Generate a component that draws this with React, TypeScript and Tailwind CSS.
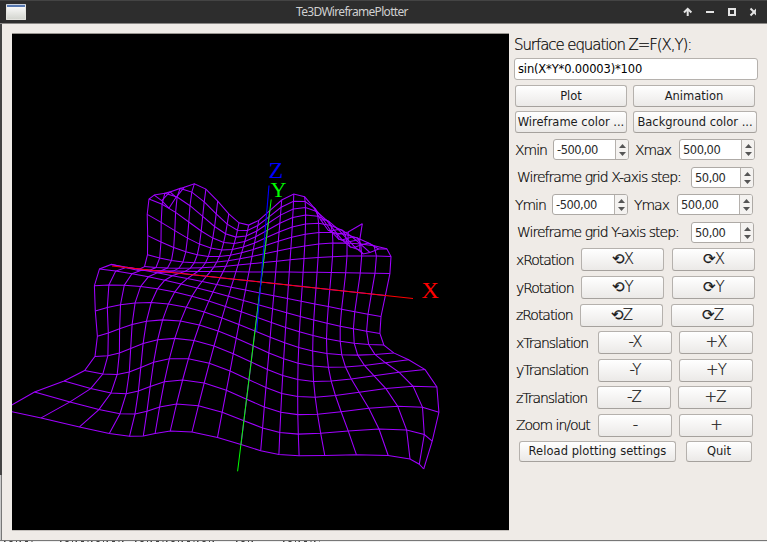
import React from 'react';

type Pt = [number, number];

// Camera fitted to the square viewport.
const cam = { yaw: -1.661, pitch: 39.944, roll: 4.85, dist: 904.143, zoom: 249.039, cx: 249, cy: 248.1 };
const rad = Math.PI / 180;

function project(x: number, y: number, z: number): Pt {
  const cy = Math.cos(cam.yaw * rad);
  const sy = Math.sin(cam.yaw * rad);
  const x1 = cy * x - sy * y;
  const y1 = sy * x + cy * y;
  const cp = Math.cos(cam.pitch * rad);
  const sp = Math.sin(cam.pitch * rad);
  const up = cp * y1 + sp * z;
  const depth = cam.dist - (cp * z - sp * y1);
  const px = (cam.zoom * x1) / depth;
  const py = (-cam.zoom * up) / depth;
  const cr = Math.cos(cam.roll * rad);
  const sr = Math.sin(cam.roll * rad);
  return [cam.cx + cr * px - sr * py, cam.cy + sr * px + cr * py];
}

const surface = (x: number, y: number) => Math.sin(x * y * 0.00003) * 100;
const steps = Array.from({ length: 20 }, (_, i) => -500 + i * 50);
const toPoints = (pts: Pt[]) => pts.map(([x, y]) => `${x.toFixed(1)},${y.toFixed(1)}`).join(' ');
const wires = [
  ...steps.map((y) => toPoints(steps.map((x) => project(x, y, surface(x, y))))),
  ...steps.map((x) => toPoints(steps.map((y) => project(x, y, surface(x, y))))),
];

function Plot() {
  return (
    <svg className="block h-[496px] w-[497px] bg-black" viewBox="0 0 497 496">
      <g fill="none" stroke="#a000ff" strokeWidth="1.05">
        {wires.map((p, i) => (
          <polyline key={i} points={p} />
        ))}
      </g>
      <line x1="100" y1="232" x2="401" y2="264.5" stroke="#f00" />
      <line x1="259.2" y1="165.500" x2="225.6" y2="437.3" stroke="#0f0" />
      <line x1="257" y1="151.500" x2="244.6" y2="297.500" stroke="#00f" strokeWidth="1.1" />
      <g className="font-['Liberation_Serif',serif] text-[24px]">
        <text x="256.5" y="143.5" fill="#00f">Z</text>
        <text x="258.5" y="162.500" fill="#0f0" className="text-[22px]">Y</text>
        <text x="409.500" y="264" fill="#f00">X</text>
      </g>
    </svg>
  );
}

function Button({ className, children }: { className: string; children: React.ReactNode }) {
  return (
    <button
      className={`flex shrink-0 items-center justify-center whitespace-nowrap rounded-[3px] border border-[#b5b1ad] border-b-[#a5a19d] bg-linear-to-b from-white to-[#ebe9e7] text-[#1c1c1c] ${className}`}
    >
      {children}
    </button>
  );
}

function Label({ className, children }: { className: string; children: React.ReactNode }) {
  return (
    <span
      className={`shrink-0 whitespace-nowrap font-['DejaVu_Sans_Light','DejaVu_Sans',sans-serif] text-[14px] font-extralight tracking-[-1.04px] text-black [-webkit-text-stroke:0.2px_#000] ${className}`}
    >
      {children}
    </span>
  );
}

function Spin({ className, value }: { className: string; value: string }) {
  return (
    <div className={`flex h-[21px] shrink-0 overflow-hidden rounded-[3px] border border-[#aeaaa6] bg-white ${className}`}>
      <span className="flex flex-1 items-center pt-[2px] pl-[3px] text-[11.5px] tracking-[-0.5px] text-[#2a2a2a]">{value}</span>
      <span className="flex w-[13px] items-center justify-center border-l border-[#b5b1ad] bg-[#f4f2f0]">
        <svg className="h-[15px] w-[7px]" viewBox="0 0 7 15" fill="#555">
          <path d="M3.5 2 7 6H0z" />
          <path d="M3.5 14 7 10H0z" />
        </svg>
      </span>
    </div>
  );
}

const rotations = [
  { axis: 'X', name: 'xRotation', label: 'w-[65px]' },
  { axis: 'Y', name: 'yRotation', label: 'w-[65px]' },
  { axis: 'Z', name: 'zRotation', label: 'w-[64px]' },
];

const moves = [
  { name: 'xTranslation', minus: '-X', plus: '+X', label: 'w-[82px]' },
  { name: 'yTranslation', minus: '-Y', plus: '+Y', label: 'w-[82px]' },
  { name: 'zTranslation', minus: '-Z', plus: '+Z', label: 'w-[81px]' },
  { name: 'Zoom in/out', minus: '-', plus: '+', label: 'w-[82px]' },
];

const rowClass = 'flex h-[27.55px] shrink-0 items-center';
const thin =
  "font-['DejaVu_Sans_Light','DejaVu_Sans',sans-serif] font-extralight text-[15px] tracking-[-0.9px] h-[23px] [-webkit-text-stroke:0.2px_#000]";

function Controls() {
  return (
    <div className="flex w-[254px] flex-col">
      <Label className="mt-[9px] h-[25px] text-[15px]! leading-[25px] tracking-[-1.08px]!">Surface equation Z=F(X,Y):</Label>
      <div className="flex h-[22px] w-[244px] items-center rounded-[3px] border border-[#b5b1ad] bg-white pt-[1px] pl-[3px] text-[11.5px] tracking-[-0.15px]">
        sin(X*Y*0.00003)*100
      </div>
      <div className="mt-[5px] flex gap-[6px] pl-[1px]">
        <Button className="h-[22px] w-[112px] pt-[1px]">Plot</Button>
        <Button className="h-[22px] w-[122px] pt-[1px]">Animation</Button>
      </div>
      <div className="mt-[4px] mb-[3px] flex gap-[6px] pl-[1px]">
        <Button className="h-[22px] w-[112px] pt-[1px]">Wireframe color ...</Button>
        <Button className="h-[22px] w-[124px] pt-[1px]">Background color ...</Button>
      </div>
      <div className={`${rowClass} pl-[1px]`}>
        <Label className="w-[38px]">Xmin</Label>
        <Spin className="w-[76px]" value="-500,00" />
        <Label className="ml-[6px] w-[44px]">Xmax</Label>
        <Spin className="w-[76px]" value="500,00" />
      </div>
      <div className={`${rowClass} pl-[3px]`}>
        <Label className="w-[174px] tracking-[-0.98px]!">Wireframe grid X-axis step:</Label>
        <Spin className="w-[63px]" value="50,00" />
      </div>
      <div className={`${rowClass} pl-[1px]`}>
        <Label className="w-[37px]">Ymin</Label>
        <Spin className="w-[76px]" value="-500,00" />
        <Label className="ml-[6px] w-[43px]">Ymax</Label>
        <Spin className="w-[76px]" value="500,00" />
      </div>
      <div className={`${rowClass} pl-[3px]`}>
        <Label className="w-[174px] tracking-[-0.98px]!">Wireframe grid Y-axis step:</Label>
        <Spin className="w-[63px]" value="50,00" />
      </div>
      {rotations.map((r) => (
        <div key={r.name} className={`${rowClass} pl-[2px]`}>
          <Label className={r.label}>{r.name}</Label>
          <Button className={`${thin} w-[83px]`}>⟲{r.axis}</Button>
          <Button className={`${thin} ml-[8px] w-[83px]`}>⟳{r.axis}</Button>
        </div>
      ))}
      {moves.map((m) => (
        <div key={m.name} className={`${rowClass} pl-[2px]`}>
          <Label className={m.label}>{m.name}</Label>
          <Button className={`${thin} w-[74px]`}>{m.minus}</Button>
          <Button className={`${thin} ml-[7px] w-[74px]`}>{m.plus}</Button>
        </div>
      ))}
      <div className="mt-[2px] flex gap-[10px] pl-[5px]">
        <Button className="h-[21px] w-[157px] pt-[1px] tracking-[0.05px]">Reload plotting settings</Button>
        <Button className="h-[21px] w-[66px] pt-[1px]">Quit</Button>
      </div>
    </div>
  );
}

export default function App() {
  return (
    <div className="flex h-[542px] w-[767px] flex-col overflow-hidden bg-[#efebe7] font-['DejaVu_Sans',sans-serif] text-[11.5px] leading-none">
      <header className="flex h-[24px] shrink-0 items-center border-t border-b border-t-[#444] border-b-[#8a8886] bg-[#2d2d2d] pl-[6px]">
        <div className="h-[16px] w-[20px] rounded-[1px] border border-[#e4e4e0] border-t-[#c8d0dc] bg-linear-to-b from-white to-[#d4d6d0]">
          <div className="h-[2px] bg-[#5577b0]" />
        </div>
        <h1 className="ml-[270px] w-[380px] whitespace-nowrap font-['Noto_Sans',sans-serif] text-[12px] tracking-[-0.68px] text-[#d0d0d0]">
          Te3DWireframePlotter
        </h1>
        <svg className="h-[12px] w-[80px]" viewBox="676 6 80 12" fill="none" stroke="#e4e4e4" strokeWidth="2">
          <path d="M687.7 16V9M684 12.500l3.700-3.700L691.400 12.500" />
          <path d="M706 12h8" />
          <path d="M729 9h6v6h-6z" />
          <path d="M750.500 8.500l7 7M757.500 8.500l-7 7" />
        </svg>
      </header>
      <main className="flex h-[517px] shrink-0 border-b border-b-[#777]">
        <div className="flex w-[2px] shrink-0 flex-col">
          <div className="h-[451px] bg-[#444]" />
          <div className="flex-1 border-r border-[#777] bg-[#c8c8c8]" />
        </div>
        <div className="mt-[9px] ml-[10px] h-[498px] border-t border-b border-t-[#999590] border-b-[#c4c0bc]">
          <Plot />
        </div>
        <div className="ml-[5px]">
          <Controls />
        </div>
      </main>
      <svg className="h-[1px] w-[767px] shrink-0 bg-[#eee]" viewBox="0 0 767 1">
        <path d="M4 .5h30M60 .5h64M135 .5h82M236 .5h20M283 .5h37" stroke="#444" strokeDasharray="1.500 4 3 3.500 1 2.500" />
      </svg>
    </div>
  );
}
